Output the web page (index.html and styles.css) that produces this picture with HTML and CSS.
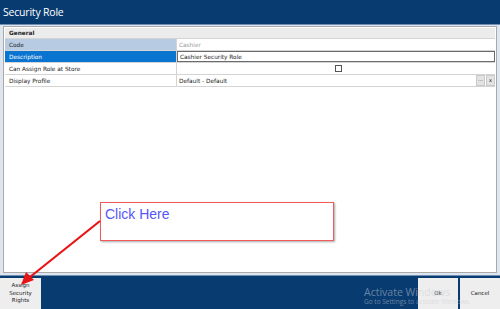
FILE: index.html
```html
<!DOCTYPE html>
<html lang="en">
<head>
    <meta charset="UTF-8">
    <title>Security Role</title>
    <link rel="stylesheet" href="styles.css">
</head>
<body>
    <div id="window">
        <div class="titlebar">Security Role</div>
        <div class="content">
            <div class="panel">
                <div class="grid">
                    <div class="row group"><span class="cell label">General</span></div>
                    <div class="row">
                        <span class="cell label code">Code</span>
                        <span class="cell value muted">Cashier</span>
                    </div>
                    <div class="row">
                        <span class="cell label selected">Description</span>
                        <span class="cell value editing">Cashier Security Role</span>
                    </div>
                    <div class="row">
                        <span class="cell label">Can Assign Role at Store</span>
                        <span class="cell value center"><span class="checkbox"></span></span>
                    </div>
                    <div class="row">
                        <span class="cell label">Display Profile</span>
                        <span class="cell value">
                            <span class="grow">Default - Default</span>
                            <span class="mini">&middot;&middot;&middot;</span>
                            <span class="mini">x</span>
                        </span>
                    </div>
                </div>
            </div>
        </div>
        <div class="footer">
            <button class="btn assign">Assign<br>Security<br>Rights</button>
            <div class="spacer"></div>
            <button class="btn">Ok</button>
            <button class="btn">Cancel</button>
        </div>

        <div class="callout">Click Here</div>
        <svg class="arrow" width="500" height="309" viewBox="0 0 500 309">
            <line x1="100" y1="221" x2="30" y2="277" stroke="#e81414" stroke-width="2.2"/>
            <polygon points="21,285 26,272 34,280" fill="#e81414"/>
        </svg>
        <div class="watermark">
            <div class="wm-big">Activate Windows</div>
            <div class="wm-small">Go to Settings to activate Windows.</div>
        </div>
    </div>
</body>
</html>
```

FILE: styles.css
```css
body{
    margin: 0;
    font-family: "Liberation Sans", Arial, sans-serif;
}
#window{
    position: relative;
    width: 500px;
    height: 309px;
    display: flex;
    flex-direction: column;
    background-color: #dfe5ee;
    overflow: hidden;
}
.titlebar{
    height: 24px;
    background-color: #083b70;
    border-bottom: 1px solid #6f8fb5;
    color: white;
    font-family: "Open Sans", sans-serif;
    font-size: 10.5px;
    letter-spacing: -0.2px;
    line-height: 24px;
    padding-left: 3px;
}
.content{
    flex: 1;
    padding: 1px 3px 2px 3px;
    display: flex;
}
.panel{
    flex: 1;
    background-color: white;
    border: 1px solid #a9a9a9;
    padding: 1px 1px 0 1px;
}
.grid{
    font-family: "DejaVu Sans", sans-serif;
    font-size: 5.8px;
    color: #222;
}
.row{
    display: flex;
    height: 11px;
    border-bottom: 1px solid #d4d4d4;
}
.row.group{
    background-color: #ececec;
    font-weight: bold;
    height: 10px;
}
.cell{
    display: flex;
    align-items: center;
    padding-left: 4px;
}
.label{
    width: 167px;
    border-right: 1px solid #d4d4d4;
}
.group .label{
    border-right: none;
}
.code{
    background-color: #b7cbe3;
}
.selected{
    background-color: #0a74d1;
    color: white;
}
.value{
    flex: 1;
    padding-left: 2px;
}
.muted{
    color: #9a9a9a;
}
.editing{
    border: 1px solid #6b6b6b;
}
.center{
    justify-content: center;
}
.checkbox{
    width: 5px;
    height: 5px;
    border: 1px solid #555;
    background: white;
    margin-left: 2px;
}
.grow{
    flex: 1;
}
.mini{
    width: 7px;
    height: 9px;
    background-color: #e3e3e3;
    border: 1px solid #c9c9c9;
    font-size: 5px;
    text-align: center;
    line-height: 8px;
    margin-left: 1px;
}
.footer{
    height: 33px;
    background-color: #083b70;
    border-top: 1px solid #6f8fb5;
    display: flex;
    align-items: flex-end;
}
.btn{
    height: 31px;
    width: 40px;
    background-color: #eeeeee;
    border: none;
    padding: 0;
    font-family: "DejaVu Sans", sans-serif;
    font-size: 5.5px;
    line-height: 7.5px;
    color: #222;
}
.assign{
    width: 41px;
}
.spacer{
    flex: 1;
}
.btn + .btn{
    margin-left: 2px;
}
.callout{
    position: absolute;
    left: 100px;
    top: 202px;
    width: 224px;
    height: 33px;
    padding: 2px 4px;
    background: white;
    border: 1.5px solid #f25a5a;
    box-shadow: 1px 1px 2px rgba(0,0,0,0.35);
    color: #5757f5;
    font-size: 14px;
    line-height: 18px;
}
.arrow{
    position: absolute;
    left: 0;
    top: 0;
}
.watermark{
    position: absolute;
    left: 364px;
    top: 286px;
    color: rgba(200,205,215,0.5);
    font-family: "Open Sans", sans-serif;
}
.wm-big{
    font-size: 10.5px;
    line-height: 12px;
}
.wm-small{
    font-size: 6.5px;
    line-height: 8px;
}
```
